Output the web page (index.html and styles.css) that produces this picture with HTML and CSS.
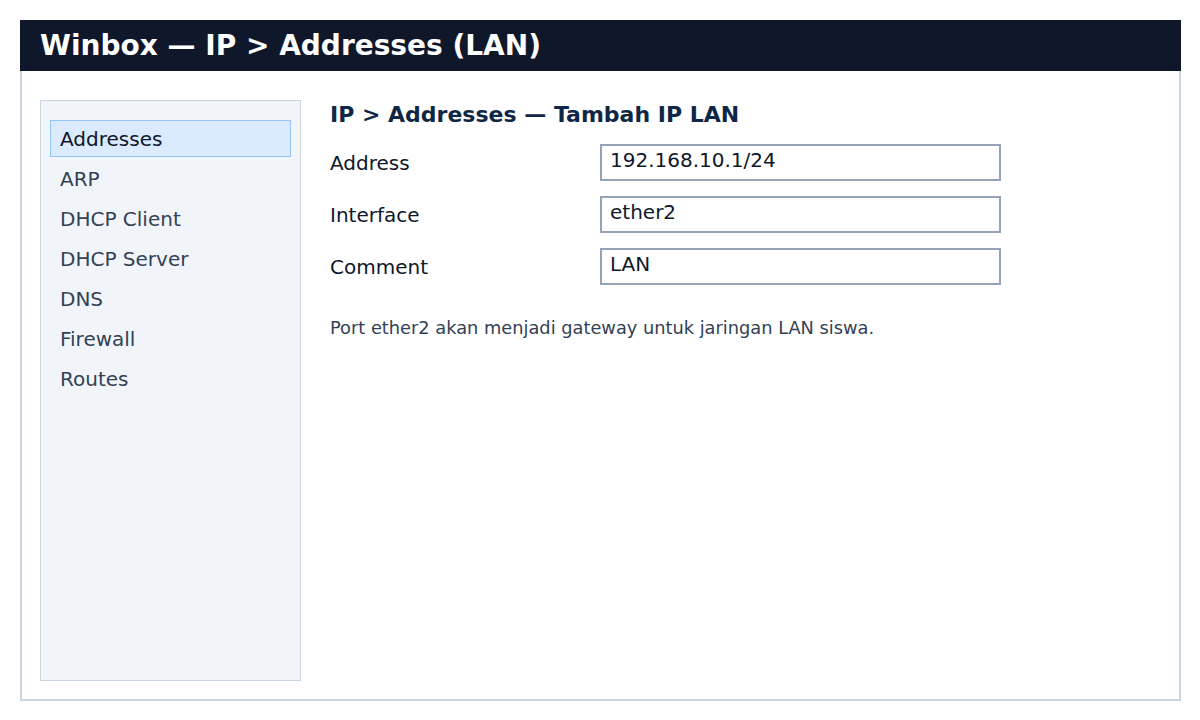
FILE: index.html
```html
<!DOCTYPE html>
<html lang="id">
<head>
    <meta charset="UTF-8">
    <title>Winbox — IP &gt; Addresses (LAN)</title>
    <link rel="stylesheet" href="styles.css">
</head>
<body>
    <div class="window">
        <div class="titlebar">Winbox — IP &gt; Addresses (LAN)</div>
        <div class="window-body">
            <ul class="sidebar">
                <li class="active">Addresses</li>
                <li>ARP</li>
                <li>DHCP Client</li>
                <li>DHCP Server</li>
                <li>DNS</li>
                <li>Firewall</li>
                <li>Routes</li>
            </ul>
            <div class="main">
                <h2>IP &gt; Addresses — Tambah IP LAN</h2>
                <div class="form">
                    <label>Address</label>
                    <div class="field">192.168.10.1/24</div>
                    <label>Interface</label>
                    <div class="field">ether2</div>
                    <label>Comment</label>
                    <div class="field">LAN</div>
                </div>
                <p class="note">Port ether2 akan menjadi gateway untuk jaringan LAN siswa.</p>
            </div>
        </div>
    </div>
</body>
</html>
```

FILE: styles.css
```css
* {
    margin: 0;
    padding: 0;
    box-sizing: border-box;
}

body {
    background: #ffffff;
    font-family: 'DejaVu Sans', sans-serif;
    padding: 20px;
}

.window {
    width: 1161px;
}

.titlebar {
    height: 51px;
    background: #0f172a;
    color: #ffffff;
    font-size: 28px;
    font-weight: 700;
    line-height: 51px;
    padding-left: 20px;
}

.window-body {
    height: 630px;
    border: 2px solid #cbd5e1;
    border-top: none;
    padding: 29px 18px 18px 18px;
    display: flex;
    gap: 29px;
}

.sidebar {
    list-style: none;
    width: 261px;
    background: #f1f5f9;
    border: 1px solid #cbd5e1;
    padding: 19px 9px;
}

.sidebar li {
    height: 37px;
    margin-bottom: 3px;
    border: 1px solid transparent;
    padding-left: 9px;
    line-height: 36px;
    font-size: 20px;
    color: #334155;
}

.sidebar li.active {
    background: #dbeafe;
    border-color: #93c5fd;
    color: #0f172a;
}

.main {
    flex: 1;
}

.main h2 {
    font-size: 22px;
    font-weight: 700;
    color: #0f2747;
    line-height: 28px;
    padding-top: 1px;
    margin-bottom: 15px;
}

.form {
    display: grid;
    grid-template-columns: 270px 401px;
    row-gap: 15px;
    align-items: center;
}

.form label {
    font-size: 20px;
    color: #0f172a;
}

.field {
    height: 37px;
    border: 2px solid #94a3b8;
    padding: 1px 8px;
    font-size: 20px;
    line-height: 26px;
    color: #0f172a;
}

.note {
    margin-top: 32px;
    font-size: 17.8px;
    color: #334155;
}
```
